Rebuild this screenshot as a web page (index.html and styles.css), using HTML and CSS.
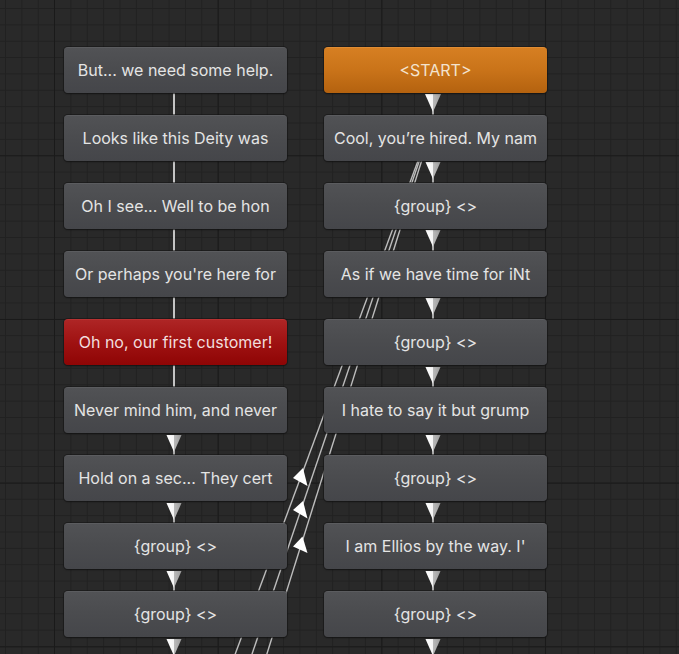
FILE: index.html
```html
<!DOCTYPE html>
<html>
<head>
<meta charset="utf-8">
<link rel="stylesheet" href="styles.css">
</head>
<body>
<div class="canvas">
  <svg class="wires" width="679" height="654" viewBox="0 0 679 654">
    <defs>
      <linearGradient id="tri" x1="0" y1="0" x2="1" y2="0">
        <stop offset="0" stop-color="#ffffff"/>
        <stop offset="0.5" stop-color="#f4f4f4"/>
        <stop offset="0.52" stop-color="#b9b9b9"/>
        <stop offset="1" stop-color="#9d9d9d"/>
      </linearGradient>
    </defs>
    <g stroke="#c4c4c4" stroke-width="2" fill="none">
      <line x1="174" y1="70" x2="174" y2="411"/>
    </g>
    <g stroke="#bdbdbd" stroke-width="1.4" fill="none">
      <line x1="422" y1="150" x2="233" y2="660"/>
      <line x1="423" y1="150" x2="250" y2="660"/>
      <line x1="425" y1="150" x2="265" y2="660"/>
    </g>
    <g class="stubs" stroke="#aaaaaa" stroke-width="2">
      <line x1="174" y1="445" x2="174" y2="456"/>
      <line x1="174" y1="513" x2="174" y2="524"/>
      <line x1="174" y1="581" x2="174" y2="592"/>
      <line x1="433" y1="104" x2="433" y2="115"/>
      <line x1="433" y1="172" x2="433" y2="183"/>
      <line x1="433" y1="240" x2="433" y2="251"/>
      <line x1="433" y1="308" x2="433" y2="320"/>
      <line x1="433" y1="377" x2="433" y2="388"/>
      <line x1="433" y1="445" x2="433" y2="456"/>
      <line x1="433" y1="513" x2="433" y2="524"/>
      <line x1="433" y1="581" x2="433" y2="592"/>
    </g>
    <g fill="url(#tri)">
      <polygon points="166.5,435 181.5,435 174,452"/>
      <polygon points="166.5,503 181.5,503 174,520"/>
      <polygon points="166.5,571 181.5,571 174,588"/>
      <polygon points="166.5,639 181.5,639 174,656"/>
      <polygon points="425,94 441,94 433,112"/>
      <polygon points="425.5,162 440.5,162 433,179"/>
      <polygon points="425.5,230 440.5,230 433,247"/>
      <polygon points="425.5,298 440.5,298 433,315"/>
      <polygon points="425.5,367 440.5,367 433,384"/>
      <polygon points="425.5,435 440.5,435 433,452"/>
      <polygon points="425.5,503 440.5,503 433,520"/>
      <polygon points="425.5,571 440.5,571 433,588"/>
      <polygon points="425.5,639 440.5,639 433,656"/>
    </g>
    <g fill="#ffffff">
      <polygon points="293,478 303,468 307.5,486"/>
      <polygon points="293,510 303,501 307.5,518.5"/>
      <polygon points="293,546.5 302.5,536.5 307.5,553"/>
    </g>
  </svg>

  <div class="node">But... we need some help.</div>
  <div class="node start">&lt;START&gt;</div>

  <div class="node">Looks like this Deity was</div>
  <div class="node">Cool, you’re hired. My nam</div>

  <div class="node">Oh I see... Well to be hon</div>
  <div class="node">{group} &lt;&gt;</div>

  <div class="node">Or perhaps you're here for</div>
  <div class="node">As if we have time for iNt</div>

  <div class="node red">Oh no, our first customer!</div>
  <div class="node">{group} &lt;&gt;</div>

  <div class="node">Never mind him, and never</div>
  <div class="node">I hate to say it but grump</div>

  <div class="node">Hold on a sec... They cert</div>
  <div class="node">{group} &lt;&gt;</div>

  <div class="node">{group} &lt;&gt;</div>
  <div class="node">I am Ellios by the way. I'</div>

  <div class="node">{group} &lt;&gt;</div>
  <div class="node">{group} &lt;&gt;</div>
</div>
</body>
</html>
```

FILE: styles.css
```css
html, body {
  margin: 0;
  padding: 0;
  width: 679px;
  height: 654px;
  overflow: hidden;
}

body {
  background-color: #292929;
  background-image:
    linear-gradient(to right, #1a1a1a 0, #1a1a1a 1px, transparent 1px),
    linear-gradient(to bottom, #1a1a1a 0, #1a1a1a 1px, transparent 1px),
    linear-gradient(to right, #212121 0, #212121 1px, transparent 1px),
    linear-gradient(to bottom, #212121 0, #212121 1px, transparent 1px);
  background-size: 163.7px 163.7px, 163.7px 163.7px, 16.37px 16.37px, 16.37px 16.37px;
  background-position: 54px 0, 0 319px, 5px 0, 0 8px;
  font-family: Inter, "Noto Sans", "DejaVu Sans", sans-serif;
}

.canvas {
  position: relative;
  width: 679px;
  height: 654px;
  box-sizing: border-box;
  padding: 47px 0 0 64px;
  display: grid;
  grid-template-columns: 223px 223px;
  grid-auto-rows: 46px;
  column-gap: 37px;
  row-gap: 22px;
  align-content: start;
}

.wires {
  position: absolute;
  left: 0;
  top: 0;
  z-index: 0;
}

.node {
  position: relative;
  z-index: 1;
  box-sizing: border-box;
  border-radius: 4px;
  background: linear-gradient(to bottom, #515255 0%, #4b4c4f 45%, #45464a 100%);
  border-top: 1px solid #5b5c5f;
  box-shadow: 0 0 0 1px rgba(20, 20, 20, 0.55), 0 1px 2px rgba(0, 0, 0, 0.4);
  color: #e4e4e4;
  font-size: 16px;
  letter-spacing: 0;
  line-height: 44px;
  text-align: center;
  white-space: nowrap;
  overflow: hidden;
  padding: 0 4px;
  text-overflow: clip;
}

.start {
  background: linear-gradient(to bottom, #d67f22 0%, #c97319 50%, #b4620f 100%);
  border-top-color: #e08c33;
  color: #f3e3cf;
}

.red {
  background: linear-gradient(to bottom, #ae2525 0%, #9f1212 50%, #8f0505 100%);
  border-top-color: #b83232;
  color: #f1dede;
}
```
